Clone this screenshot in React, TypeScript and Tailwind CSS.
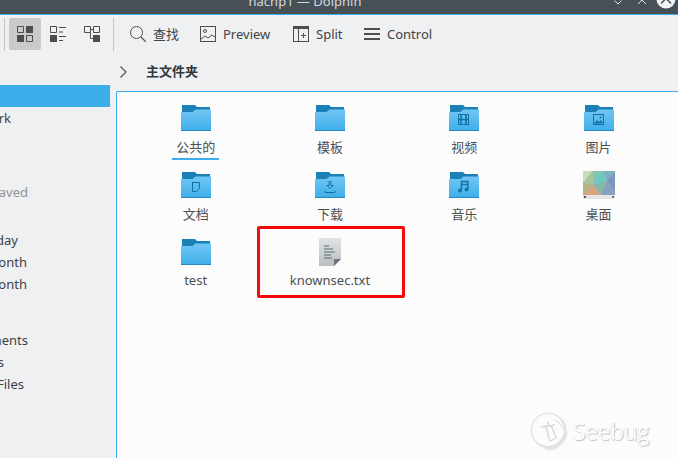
const cjk = "font-['Noto_Sans','Noto_Sans_CJK_SC',sans-serif]";

function Folder({ children }: { children?: React.ReactNode }) {
  return (
    <svg width="32" height="28" viewBox="0 0 32 28" className="block">
      <defs>
        <linearGradient id="fb" x1="0" y1="0" x2="0" y2="1">
          <stop offset="0" stopColor="#72c6f4" />
          <stop offset="1" stopColor="#3daee9" />
        </linearGradient>
      </defs>
      <path d="M2 1h13l2 2h13v6H2z" fill="#1b7fb8" />
      <path d="M1 8h11.500l3-2.500H31V27H1z" fill="url(#fb)" />
      <rect x="1" y="26" width="30" height="1" fill="#2b88bf" />
      {children}
    </svg>
  );
}

const em = { fill: "none", stroke: "#1272a8", strokeWidth: 1 };

const emblems: Record<string, React.ReactNode> = {
  doc: <path d="M12.500 11.500h7v6l-3 3h-4z" {...em} />,
  down: (
    <g>
      <path d="M15 10.500h2v4h2l-3 3-3-3h2z" {...em} />
      <path d="M11 19.500v2h10v-2" {...em} />
    </g>
  ),
  film: (
    <g>
      <rect x="10.500" y="10.500" width="10" height="10" {...em} />
      <path d="M13 10.500v10M18 10.500v10M10.500 15.500h10" {...em} strokeWidth={1.6} />
    </g>
  ),
  image: (
    <g>
      <rect x="10.500" y="10.500" width="10" height="10" {...em} />
      <path d="M11 20l3-4 2 2 2-2 2 3z" fill="#1272a8" />
      <circle cx="17.500" cy="13.500" r="1" fill="#1272a8" />
    </g>
  ),
  music: (
    <g>
      <path d="M13.500 19v-8.500h6.500V18" {...em} strokeWidth={1.4} />
      <path d="M13.500 13.500h6.500" {...em} strokeWidth={1.4} />
      <circle cx="12" cy="19.500" r="2" fill="#1272a8" />
      <circle cx="18.500" cy="18.500" r="2" fill="#1272a8" />
    </g>
  ),
};

function Wallpaper() {
  return (
    <svg width="32" height="28" viewBox="0 0 32 28" className="block">
      <rect width="32" height="24" fill="#9fb9b5" />
      <polygon points="0,0 10,0 0,12" fill="#c5dfb6" />
      <polygon points="0,12 10,0 10,14" fill="#a9c49b" />
      <polygon points="10,0 20,0 10,14" fill="#7bc9b4" />
      <polygon points="20,0 10,14 24,10" fill="#6cc8c4" />
      <polygon points="20,0 32,0 24,10" fill="#7fb0bd" />
      <polygon points="32,0 24,10 32,20" fill="#7b98bd" />
      <polygon points="0,12 10,14 0,24" fill="#b9b282" />
      <polygon points="10,14 24,10 18,24" fill="#8ab8a8" />
      <polygon points="0,24 10,14 18,24" fill="#d6a67e" />
      <polygon points="24,10 32,20 32,24 18,24" fill="#8aa0bf" />
      <rect y="24" width="32" height="4" fill="#e6e4e6" />
      <rect x="1" y="25" width="2" height="2" fill="#555" />
      <rect x="29" y="25" width="2" height="2" fill="#777" />
    </svg>
  );
}

function TextFile() {
  return (
    <svg width="22" height="28" viewBox="0 0 22 28" className="block">
      <defs>
        <linearGradient id="tf" x1="0" y1="0" x2="0" y2="1">
          <stop offset="0" stopColor="#dfe3e3" />
          <stop offset="1" stopColor="#b9bebf" />
        </linearGradient>
      </defs>
      <path d="M0 0h22v21l-7 7H0z" fill="url(#tf)" />
      <path d="M22 21h-7v7z" fill="#6b7480" />
      <path d="M5 8h5M5 11h9M5 14h11M5 17h7M5 20h8" stroke="#5f6b75" strokeWidth="1" />
    </svg>
  );
}

function Item({ label, icon, underlined, latin }: { label: string; icon: React.ReactNode; underlined?: boolean; latin?: boolean }) {
  return (
    <div className="h-[67px] flex flex-col items-center">
      <div className="h-[28px] flex items-center justify-center">{icon}</div>
      <div
        className={`${latin ? "mt-[3px]" : "mt-[4px]"} px-[4px] h-[24px] leading-[22px] text-[13px] text-[#4a4f53] whitespace-nowrap ${cjk} ${
          underlined ? "border-b-2 border-[#3daee9]" : ""
        }`}
      >
        {label}
      </div>
    </div>
  );
}

function ToolBtn({ icon, label, w }: { icon: React.ReactNode; label: string; w: string }) {
  return (
    <div className={`flex items-center gap-[7px] ${w}`}>
      {icon}
      <span className={`mt-[1px] text-[13px] text-[#3d4246] whitespace-nowrap ${cjk}`}>{label}</span>
    </div>
  );
}

const side: { t: string; w: string; top: string; cls?: string }[] = [
  { t: "Network", w: "w-[11px]", top: "mt-[1px]" },
  { t: "Recently Saved", w: "w-[28px]", top: "mt-[52px]", cls: "text-[#8f9294]" },
  { t: "Today", w: "w-[18px]", top: "mt-[26px]" },
  { t: "This Month", w: "w-[27px]", top: "" },
  { t: "Last Month", w: "w-[27px]", top: "" },
  { t: "Documents", w: "w-[28px]", top: "mt-[34px]" },
  { t: "Images", w: "w-[4px]", top: "" },
  { t: "Audio Files", w: "w-[24px]", top: "" },
];

export default function App() {
  return (
    <div className={`w-[678px] h-[458px] overflow-hidden relative bg-[#eff0f1] flex flex-col ${cjk}`}>
      <div className="h-[15px] shrink-0 bg-[#475057] border-b border-[#3daee9] relative overflow-hidden">
        <div className="text-center text-[13px] leading-[13px] mt-[-5px] text-[#d5d8da] pr-[68px]">hachp1 — Dolphin</div>
        <svg width="678" height="14" viewBox="0 0 678 14" className="absolute left-0 top-0">
          <path d="M614.500 0.500l3.500 3.500 3.500-3.500" fill="none" stroke="#e6e8ea" strokeWidth="1" />
          <path d="M638 4l4-4 4 4" fill="none" stroke="#e6e8ea" strokeWidth="1" />
          <circle cx="666" cy="-1" r="9.500" fill="#f2f3f4" />
          <path d="M661 3.500l5-5 5 5" fill="none" stroke="#475057" strokeWidth="1.500" />
        </svg>
      </div>

      <div className="h-[38px] shrink-0 flex items-center pl-[4px]">
        <div className="w-px h-[33px] bg-[#c2c4c6]" />
        <div className="ml-[4px] w-[32px] h-[32px] rounded-[2px] bg-[#c9cacb] flex items-center justify-center">
          <svg width="16" height="16" viewBox="0 0 16 16">
            <path d="M.5.500h6v6h-6zM9.500 9.500h6v6h-6z" fill="none" stroke="#4d4d4d" />
            <path d="M9 0h7v7H9zM0 9h7v7H0z" fill="#4d4d4d" />
          </svg>
        </div>
        <div className="w-[34px] h-[32px] flex items-center justify-center">
          <svg width="16" height="16" viewBox="0 0 16 16">
            <path d="M.5.500h6v6h-6z" fill="none" stroke="#4d4d4d" />
            <path d="M0 9h7v7H0z" fill="#4d4d4d" />
            <path d="M9 1.500h7M9 6h4M9 10.500h7M9 14.500h4" stroke="#4d4d4d" />
          </svg>
        </div>
        <div className="w-[34px] h-[32px] flex items-center justify-center">
          <svg width="16" height="16" viewBox="0 0 16 16">
            <path d="M.5.500h6v6h-6zM9.500.500h6v6h-6z" fill="none" stroke="#4d4d4d" />
            <path d="M6.500 3.500h3M6.500 6.500v6H9" fill="none" stroke="#4d4d4d" />
            <path d="M9 9h7v7H9z" fill="#4d4d4d" />
          </svg>
        </div>
        <div className="ml-[4px] w-px h-[33px] bg-[#c2c4c6]" />
        <div className="ml-[16px] flex items-center">
          <ToolBtn
            w="w-[70px]"
            label="查找"
            icon={
              <svg width="16" height="16" viewBox="0 0 16 16">
                <circle cx="6.500" cy="6.500" r="6" fill="none" stroke="#4d4d4d" />
                <path d="M11 11l5 5" stroke="#4d4d4d" strokeWidth="1.200" />
              </svg>
            }
          />
          <ToolBtn
            w="w-[93px]"
            label="Preview"
            icon={
              <svg width="16" height="16" viewBox="0 0 16 16">
                <rect x=".5" y=".5" width="15" height="15" fill="none" stroke="#4d4d4d" />
                <circle cx="5" cy="5" r="1.500" fill="none" stroke="#4d4d4d" />
                <path d="M1 13l4-3 3 2 4-3 3 2" fill="none" stroke="#4d4d4d" />
              </svg>
            }
          />
          <ToolBtn
            w="w-[71px]"
            label="Split"
            icon={
              <svg width="16" height="16" viewBox="0 0 16 16">
                <rect x=".5" y=".5" width="15" height="15" fill="none" stroke="#4d4d4d" />
                <path d="M0 0h16v3H0z" fill="#4d4d4d" />
                <path d="M5.500 3v12M8 9.500h5M10.500 7v5" stroke="#4d4d4d" />
              </svg>
            }
          />
          <ToolBtn
            w="w-[80px]"
            label="Control"
            icon={
              <svg width="16" height="16" viewBox="0 0 16 16">
                <path d="M0 2h16v2H0zM0 7h16v2H0zM0 12h16v2H0z" fill="#4d4d4d" />
              </svg>
            }
          />
        </div>
      </div>

      <div className="flex-1 min-h-0 flex">
        <div className="w-[110px] shrink-0 pt-[32px] overflow-hidden">
          <div className="h-[22px] bg-[#3daee9]" />
          {side.map((s) => (
            <div
              key={s.t}
              className={`${s.w} ${s.top} h-[22px] flex justify-end items-center whitespace-nowrap text-[13px] ${s.cls ?? "text-[#3d4246]"}`}
            >
              <span className="shrink-0">{s.t}</span>
            </div>
          ))}
        </div>

        <div className="ml-[6px] flex-1 min-w-0 flex flex-col">
          <div className="h-[38px] shrink-0 flex items-center pl-[4px]">
            <svg width="7" height="12" viewBox="0 0 7 12">
              <path d="M.5.500L6 6 .5 11.500" fill="none" stroke="#4d4d4d" strokeWidth="1.100" />
            </svg>
            <span className="ml-[19px] text-[13px] font-bold text-[#31363b]">主文件夹</span>
          </div>
          <div className="flex-1 bg-[#fcfcfc] border-l border-t border-[#3daee9] rounded-tl-[2px] pt-[12px] pl-[11.5px]">
            <div className="grid grid-cols-[repeat(4,134.3px)]">
              <Item label="公共的" underlined icon={<Folder />} />
              <Item label="模板" icon={<Folder />} />
              <Item label="视频" icon={<Folder>{emblems.film}</Folder>} />
              <Item label="图片" icon={<Folder>{emblems.image}</Folder>} />
              <Item label="文档" icon={<Folder>{emblems.doc}</Folder>} />
              <Item label="下载" icon={<Folder>{emblems.down}</Folder>} />
              <Item label="音乐" icon={<Folder>{emblems.music}</Folder>} />
              <Item label="桌面" icon={<Wallpaper />} />
              <Item latin label="test" icon={<Folder />} />
              <Item latin label="knownsec.txt" icon={<TextFile />} />
            </div>
          </div>
        </div>
      </div>

      <div className="absolute left-[257px] top-[226px] w-[148px] h-[72px] border-[3px] border-[#f50a0a] rounded-[2px]" />

      <div className="absolute left-[530px] top-[410px] flex items-center gap-[3px] opacity-80">
        <svg width="40" height="42" viewBox="0 0 40 42" className="drop-shadow-[1px_1px_1px_rgba(0,0,0,0.2)]">
          <circle cx="18" cy="20" r="16.500" fill="#fdfdfd" stroke="#d8d8d8" strokeWidth="1.200" />
          <path d="M14 38c10 2 20-6 21-16-2-6-6-10-11-12" fill="none" stroke="#dedede" strokeWidth="1.200" />
          <path d="M18 11v5M11 17l14-2M16 17l4 14 6-3-5-13" fill="none" stroke="#cecece" strokeWidth="1.300" />
        </svg>
        <span className="font-['Open_Sans',sans-serif] text-[23px] leading-[30px] tracking-[-0.5px] text-[#fdfdfd] [text-shadow:1px_1px_1px_#b5b5b5,-0.5px_-0.5px_0.5px_#d5d5d5]">
          Seebug
        </span>
      </div>
    </div>
  );
}
